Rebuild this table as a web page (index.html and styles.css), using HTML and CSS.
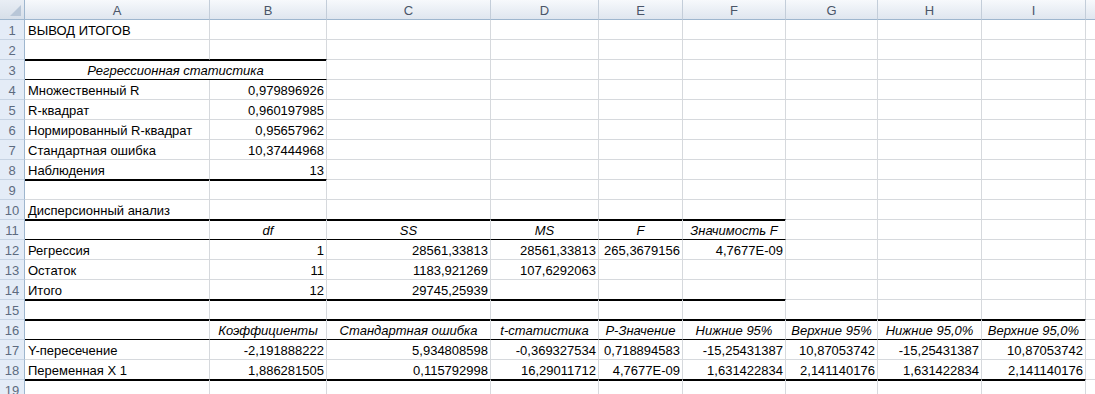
FILE: index.html
```html
<!DOCTYPE html>
<html lang="ru">
<head>
<meta charset="utf-8">
<title>Вывод итогов</title>
<link rel="stylesheet" href="styles.css">
</head>
<body>
<table class="sheet">
  <colgroup>
    <col class="c-rn"><col class="c-a"><col class="c-b"><col class="c-c"><col class="c-d"><col class="c-e"><col class="c-f"><col class="c-g"><col class="c-h"><col class="c-i"><col class="c-j">
  </colgroup>
  <thead>
    <tr class="colhead">
      <th class="corner"><span class="tri"></span></th>
      <th>A</th><th>B</th><th>C</th><th>D</th><th>E</th><th>F</th><th>G</th><th>H</th><th>I</th><th></th>
    </tr>
  </thead>
  <tbody>
    <tr><th class="rn">1</th><td>ВЫВОД ИТОГОВ</td><td></td><td></td><td></td><td></td><td></td><td></td><td></td><td></td><td></td></tr>
    <tr><th class="rn">2</th><td class="tk"></td><td class="tk"></td><td></td><td></td><td></td><td></td><td></td><td></td><td></td><td></td></tr>
    <tr><th class="rn">3</th><td class="it ctr tn" colspan="2">Регрессионная статистика</td><td></td><td></td><td></td><td></td><td></td><td></td><td></td><td></td></tr>
    <tr><th class="rn">4</th><td>Множественный R</td><td class="num">0,979896926</td><td></td><td></td><td></td><td></td><td></td><td></td><td></td><td></td></tr>
    <tr><th class="rn">5</th><td>R-квадрат</td><td class="num">0,960197985</td><td></td><td></td><td></td><td></td><td></td><td></td><td></td><td></td></tr>
    <tr><th class="rn">6</th><td>Нормированный R-квадрат</td><td class="num">0,95657962</td><td></td><td></td><td></td><td></td><td></td><td></td><td></td><td></td></tr>
    <tr><th class="rn">7</th><td>Стандартная ошибка</td><td class="num">10,37444968</td><td></td><td></td><td></td><td></td><td></td><td></td><td></td><td></td></tr>
    <tr><th class="rn">8</th><td class="tk">Наблюдения</td><td class="num tk">13</td><td></td><td></td><td></td><td></td><td></td><td></td><td></td><td></td></tr>
    <tr><th class="rn">9</th><td></td><td></td><td></td><td></td><td></td><td></td><td></td><td></td><td></td><td></td></tr>
    <tr><th class="rn">10</th><td class="tk">Дисперсионный анализ</td><td class="tk"></td><td class="tk"></td><td class="tk"></td><td class="tk"></td><td class="tk"></td><td></td><td></td><td></td><td></td></tr>
    <tr><th class="rn">11</th><td class="tn"></td><td class="it ctr tn">df</td><td class="it ctr tn">SS</td><td class="it ctr tn">MS</td><td class="it ctr tn">F</td><td class="it ctr tn">Значимость F</td><td></td><td></td><td></td><td></td></tr>
    <tr><th class="rn">12</th><td>Регрессия</td><td class="num">1</td><td class="num">28561,33813</td><td class="num">28561,33813</td><td class="num">265,3679156</td><td class="num">4,7677E-09</td><td></td><td></td><td></td><td></td></tr>
    <tr><th class="rn">13</th><td>Остаток</td><td class="num">11</td><td class="num">1183,921269</td><td class="num">107,6292063</td><td></td><td></td><td></td><td></td><td></td><td></td></tr>
    <tr><th class="rn">14</th><td class="tk">Итого</td><td class="num tk">12</td><td class="num tk">29745,25939</td><td class="tk"></td><td class="tk"></td><td class="tk"></td><td></td><td></td><td></td><td></td></tr>
    <tr><th class="rn">15</th><td class="tk"></td><td class="tk"></td><td class="tk"></td><td class="tk"></td><td class="tk"></td><td class="tk"></td><td class="tk"></td><td class="tk"></td><td class="tk"></td><td></td></tr>
    <tr><th class="rn">16</th><td class="tn"></td><td class="it ctr tn">Коэффициенты</td><td class="it ctr tn">Стандартная ошибка</td><td class="it ctr tn">t-статистика</td><td class="it ctr tn">P-Значение</td><td class="it ctr tn">Нижние 95%</td><td class="it ctr tn">Верхние 95%</td><td class="it ctr tn">Нижние 95,0%</td><td class="it ctr tn">Верхние 95,0%</td><td></td></tr>
    <tr><th class="rn">17</th><td>Y-пересечение</td><td class="num">-2,191888222</td><td class="num">5,934808598</td><td class="num">-0,369327534</td><td class="num">0,718894583</td><td class="num">-15,25431387</td><td class="num">10,87053742</td><td class="num">-15,25431387</td><td class="num">10,87053742</td><td></td></tr>
    <tr><th class="rn">18</th><td class="tk">Переменная X 1</td><td class="num tk">1,886281505</td><td class="num tk">0,115792998</td><td class="num tk">16,29011712</td><td class="num tk">4,7677E-09</td><td class="num tk">1,631422834</td><td class="num tk">2,141140176</td><td class="num tk">1,631422834</td><td class="num tk">2,141140176</td><td></td></tr>
    <tr><th class="rn">19</th><td></td><td></td><td></td><td></td><td></td><td></td><td></td><td></td><td></td><td></td></tr>
  </tbody>
</table>
</body>
</html>
```
FILE: styles.css
```css
html, body {
  margin: 0;
  padding: 0;
  background: #ffffff;
  overflow: hidden;
}

body {
  font-family: "Liberation Sans", Arial, sans-serif;
  font-size: 13px;
  color: #000000;
}

.sheet {
  border-collapse: separate;
  border-spacing: 0;
  table-layout: fixed;
  width: 1110px;
}

.c-rn { width: 25px; }
.c-a { width: 185px; }
.c-b { width: 117px; }
.c-c { width: 164px; }
.c-d { width: 108px; }
.c-e { width: 84px; }
.c-f { width: 103px; }
.c-g { width: 92px; }
.c-h { width: 104px; }
.c-i { width: 104px; }
.c-j { width: 24px; }

.sheet td,
.sheet th {
  box-sizing: border-box;
  height: 20px;
  padding: 3px 2px 0 3px;
  line-height: 16px;
  border-right: 1px solid #d6d9dd;
  border-bottom: 1px solid #d6d9dd;
  white-space: nowrap;
  overflow: hidden;
  text-align: left;
  vertical-align: top;
  font-weight: normal;
}

.colhead th {
  padding: 2px 0 0 0;
  line-height: 17px;
  text-align: center;
  color: #4a5568;
  background: linear-gradient(#f7f9fc, #dfe6ef);
  border-right: 1px solid #c3cdd9;
  border-bottom: 1px solid #9eb6ce;
}

.colhead .corner {
  position: relative;
  background: linear-gradient(#e9eef5, #d7dfe9);
  border-right: 1px solid #9eb6ce;
}

.tri {
  position: absolute;
  right: 3px;
  bottom: 3px;
  width: 0;
  height: 0;
  border-left: 11px solid transparent;
  border-bottom: 11px solid #b8c6d7;
}

.sheet .rn {
  padding: 3px 0 0 0;
  text-align: center;
  color: #5d6b80;
  background: #e4ecf7;
  border-right: 1px solid #9eb6ce;
  border-bottom: 1px solid #c6d3e3;
}

.sheet .num {
  text-align: right;
  padding-right: 2px;
}

.sheet .ctr {
  text-align: center;
  padding-left: 1px;
  padding-right: 1px;
}

.it {
  font-style: italic;
}

.sheet .tn {
  border-bottom-color: #000000;
}

.sheet .tk {
  border-bottom-color: #000000;
  box-shadow: 0 1px 0 #000000;
}
```
